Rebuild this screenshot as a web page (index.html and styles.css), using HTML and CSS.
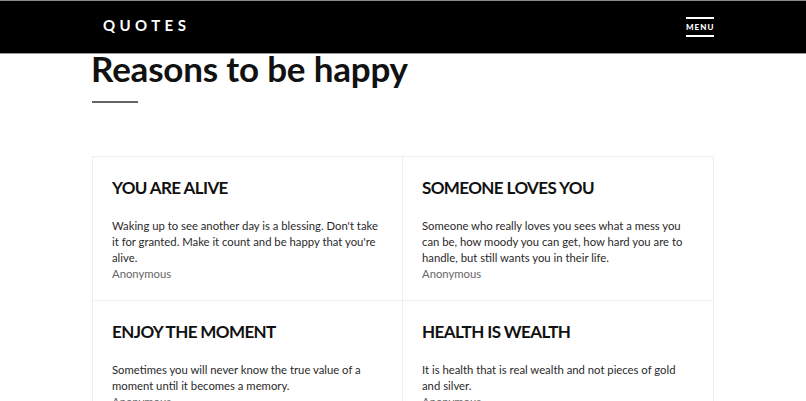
FILE: index.html
```html
<!DOCTYPE html>
<html lang="en">
<head>
<meta charset="utf-8">
<title>Quotes</title>
<link rel="stylesheet" href="styles.css">
</head>
<body>
<header class="topbar">
  <div class="topbar-inner">
    <div class="brand">QUOTES</div>
    <button class="menu-btn" type="button"><span class="menu-line"></span><span class="menu-label">MENU</span><span class="menu-line"></span></button>
  </div>
</header>
<main class="page">
  <h1 class="title">Reasons to be happy</h1>
  <div class="rule"></div>
  <section class="grid">
    <article class="card">
      <h2 class="card-title">YOU ARE ALIVE</h2>
      <p class="card-text">Waking up to see another day is a blessing. Don't take it for granted. Make it count and be happy that you're alive.</p>
      <p class="card-author">Anonymous</p>
    </article>
    <article class="card">
      <h2 class="card-title">SOMEONE LOVES YOU</h2>
      <p class="card-text">Someone who really loves you sees what a mess you can be, how moody you can get, how hard you are to handle, but still wants you in their life.</p>
      <p class="card-author">Anonymous</p>
    </article>
    <article class="card">
      <h2 class="card-title">ENJOY THE MOMENT</h2>
      <p class="card-text">Sometimes you will never know the true value of a moment until it becomes a memory.</p>
      <p class="card-author">Anonymous</p>
    </article>
    <article class="card">
      <h2 class="card-title">HEALTH IS WEALTH</h2>
      <p class="card-text">It is health that is real wealth and not pieces of gold and silver.</p>
      <p class="card-author">Anonymous</p>
    </article>
  </section>
</main>
</body>
</html>
```
FILE: styles.css
```css
* { box-sizing: border-box; }
html, body { margin: 0; padding: 0; }
body {
  font-family: "Lato", "Open Sans", "Liberation Sans", sans-serif;
  color: #111;
  background: #fff;
}
.topbar {
  background: #000;
  border-top: 1px solid #8a8a8a;
  border-bottom: 1px solid #9a9a9a;
  height: 54px;
}
.topbar-inner {
  width: 622px;
  margin: 0 auto;
  height: 100%;
  display: flex;
  align-items: center;
  justify-content: space-between;
  padding: 0 0 0 11px;
}
.brand {
  color: #fff;
  font-weight: 700;
  font-size: 15px;
  letter-spacing: 4.4px;
  margin-top: -5px;
}
.menu-btn {
  background: none;
  border: 0;
  padding: 0;
  display: flex;
  flex-direction: column;
  align-items: stretch;
  width: 28px;
  gap: 4px;
  cursor: pointer;
}
.menu-line { display: block; height: 2px; background: #fff; }
.menu-label {
  color: #fff;
  font-family: "Lato", sans-serif;
  font-weight: 900;
  font-size: 8px;
  letter-spacing: 1px;
  line-height: 8px;
  text-align: center;
}
.page {
  width: 622px;
  margin: 0 auto;
}
.title {
  margin: 0 0 0 -1px;
  font-size: 35px;
  font-weight: 700;
  line-height: 28px;
  letter-spacing: -0.2px;
}
.rule {
  width: 46px;
  height: 2px;
  background: #666;
  margin-top: 19px;
}
.grid {
  margin-top: 53px;
  display: grid;
  grid-template-columns: 1fr 1fr;
  border: 1px solid #eee;
}
.card {
  padding: 19px 20px 18px 19px;
  border-right: 1px solid #eee;
  border-bottom: 1px solid #eee;
}
.card:nth-child(2n) { border-right: 0; }
.card-title {
  margin: 0 0 18px;
  font-size: 17px;
  font-weight: 700;
  line-height: 24px;
  letter-spacing: -0.6px;
}
.card-text {
  margin: 0;
  font-size: 11.3px;
  line-height: 16px;
  color: #2a2a2a;
}
.card-author {
  margin: 0;
  font-size: 11.3px;
  line-height: 16px;
  color: #666;
}
```
